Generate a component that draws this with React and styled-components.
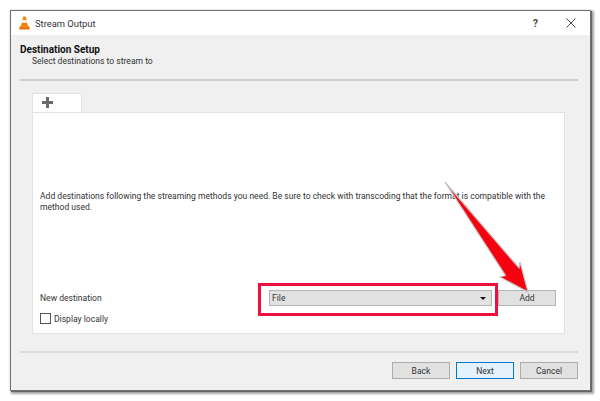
import styled, { createGlobalStyle } from "styled-components";

const GlobalStyle = createGlobalStyle`
  html, body {
    margin: 0;
    padding: 0;
    background: #ffffff;
  }
  body {
    font-family: Roboto, "Liberation Sans", sans-serif;
    font-size: 8.55px;
    color: #2a2a2a;
  }
`;

function VlcCone() {
  return (
    <svg width="11" height="14" viewBox="0 0 11 14">
      <path d="M4.2 0.5h2.6l0.8 3.6H3.4z" fill="#f28a12" />
      <path d="M3.4 4.1h4.2l0.7 3H2.7z" fill="#f4efe8" />
      <path d="M2.7 7.1h5.6l0.8 3.2H1.9z" fill="#f08208" />
      <path d="M0.6 10.3h9.8l0.5 3.2H0.1z" fill="#e8780a" />
    </svg>
  );
}

function Arrow() {
  return (
    <ArrowSvg width="100" height="120" viewBox="0 0 100 120">
      <path
        d="M1 2 L75 88 L76 82 L84 112 L56 97 L61.5 95.5 Z"
        fill="#f7000f"
        stroke="#c4c4c4"
        strokeWidth="1.2"
        strokeLinejoin="miter"
      />
    </ArrowSvg>
  );
}

export default function App() {
  return (
    <Page>
      <GlobalStyle />
      <Dialog>
        <TitleBar>
          <VlcCone />
          <TitleText>Stream Output</TitleText>
          <HelpGlyph>?</HelpGlyph>
          <svg width="10" height="10" viewBox="0 0 10 10">
            <path d="M0.5 0.5L9.5 9.5M9.5 0.5L0.5 9.5" stroke="#333" strokeWidth="0.9" />
          </svg>
        </TitleBar>
        <Body>
          <Heading>Destination Setup</Heading>
          <SubHeading>Select destinations to stream to</SubHeading>
          <Rule />
          <TabStrip>
            <Tab>
              <svg width="11" height="11" viewBox="0 0 11 11">
                <path d="M4 0h3v4h4v3H7v4H4V7H0V4h4z" fill="#6a6a6a" />
              </svg>
            </Tab>
          </TabStrip>
          <Panel>
            <Intro>
              Add destinations following the streaming methods you need. Be sure to check with
              transcoding that the format is compatible with the method used.
            </Intro>
            <DestinationRow>
              <DestinationLabel>New destination</DestinationLabel>
              <HighlightFrame>
                <Combo>
                  <span>File</span>
                  <ComboCaret />
                </Combo>
              </HighlightFrame>
              <AddButton>Add</AddButton>
            </DestinationRow>
            <CheckRow>
              <CheckBox />
              <span>Display locally</span>
            </CheckRow>
          </Panel>
          <Rule $bottom />
          <Footer>
            <WizardButton>Back</WizardButton>
            <WizardButton $primary>Next</WizardButton>
            <WizardButton>Cancel</WizardButton>
          </Footer>
        </Body>
        <Arrow />
      </Dialog>
    </Page>
  );
}

const Page = styled.div`
  width: 600px;
  height: 401px;
  padding: 10px 0 0 10px;
  box-sizing: border-box;
  overflow: hidden;
`;

const Dialog = styled.div`
  position: relative;
  width: 581px;
  height: 381px;
  box-sizing: border-box;
  border: 1px solid #6f6f6f;
  box-shadow: 1px 1px 0 #666, 2px 2px 2px 1px rgba(0, 0, 0, 0.35), 0 0 3px rgba(0, 0, 0, 0.12);
  display: flex;
  flex-direction: column;
  background: #f0f0f0;
`;

const TitleBar = styled.div`
  height: 24px;
  flex: none;
  background: #ffffff;
  display: flex;
  align-items: center;
  padding: 0 14px 0 8px;
`;

const TitleText = styled.div`
  flex: 1;
  margin-left: 5px;
  font-size: 9.4px;
  color: #333;
`;

const HelpGlyph = styled.div`
  margin-right: 28px;
  font-size: 10px;
  font-weight: 700;
  color: #444;
`;

const Body = styled.div`
  flex: 1;
  display: flex;
  flex-direction: column;
  padding: 9px 12px 0 9px;
`;

const Heading = styled.div`
  font-size: 10px;
  font-weight: 700;
  line-height: 12px;
  color: #111;
`;

const SubHeading = styled.div`
  padding-left: 12px;
  line-height: 11px;
  color: #333;
`;

const Rule = styled.div`
  height: 2px;
  flex: none;
  background: ${(p) => (p.$bottom ? "#dcdcdc" : "#cfcfcf")};
  margin-top: ${(p) => (p.$bottom ? "17px" : "12px")};
`;

const TabStrip = styled.div`
  margin: 12px 0 0 12px;
  display: flex;
`;

const Tab = styled.div`
  width: 50px;
  height: 19px;
  background: #fff;
  border: 1px solid #e3e3e3;
  border-bottom: none;
  box-sizing: border-box;
  padding: 3px 0 0 9px;
`;

const Panel = styled.div`
  margin: 0 13px 0 12px;
  height: 222px;
  box-sizing: border-box;
  background: #fff;
  border: 1px solid #e3e3e3;
  padding: 78px 8px 0 7px;
  display: flex;
  flex-direction: column;
`;

const Intro = styled.div`
  line-height: 11px;
  height: 22px;
  color: #333;
`;

const DestinationRow = styled.div`
  margin-top: 70px;
  display: flex;
  align-items: flex-start;
`;

const DestinationLabel = styled.div`
  width: 218px;
  margin-top: 10px;
  line-height: 11px;
  color: #333;
`;

const HighlightFrame = styled.div`
  width: 240px;
  height: 33px;
  box-sizing: border-box;
  border: 3px solid #ee0f3c;
  padding: 4px 3px 0 8px;
`;

const Combo = styled.div`
  height: 16px;
  box-sizing: border-box;
  background: #e2e2e2;
  border: 1px solid #b4b4b4;
  display: flex;
  align-items: center;
  justify-content: space-between;
  padding: 0 5px 0 2px;
  color: #333;
`;

const ComboCaret = styled.div`
  width: 0;
  height: 0;
  border-left: 3px solid transparent;
  border-right: 3px solid transparent;
  border-top: 3px solid #111;
`;

const AddButton = styled.div`
  width: 58px;
  height: 16px;
  margin-top: 7px;
  box-sizing: border-box;
  background: #e1e1e1;
  border: 1px solid #b4b4b4;
  display: flex;
  align-items: center;
  justify-content: center;
  color: #333;
`;

const CheckRow = styled.div`
  margin-top: -3px;
  display: flex;
  align-items: center;
  gap: 3px;
  color: #333;
`;

const CheckBox = styled.div`
  width: 9px;
  height: 9px;
  border: 1px solid #555;
  background: #fff;
`;

const Footer = styled.div`
  display: flex;
  justify-content: flex-end;
  gap: 6px;
  margin-top: 9px;
`;

const WizardButton = styled.div`
  width: 58px;
  height: 17px;
  box-sizing: border-box;
  display: flex;
  align-items: center;
  justify-content: center;
  color: #333;
  background: ${(p) => (p.$primary ? "#e5f1fb" : "#e1e1e1")};
  border: 1px solid ${(p) => (p.$primary ? "#0078d7" : "#adadad")};
`;

const ArrowSvg = styled.svg`
  position: absolute;
  left: 433px;
  top: 169px;
  pointer-events: none;
`;
